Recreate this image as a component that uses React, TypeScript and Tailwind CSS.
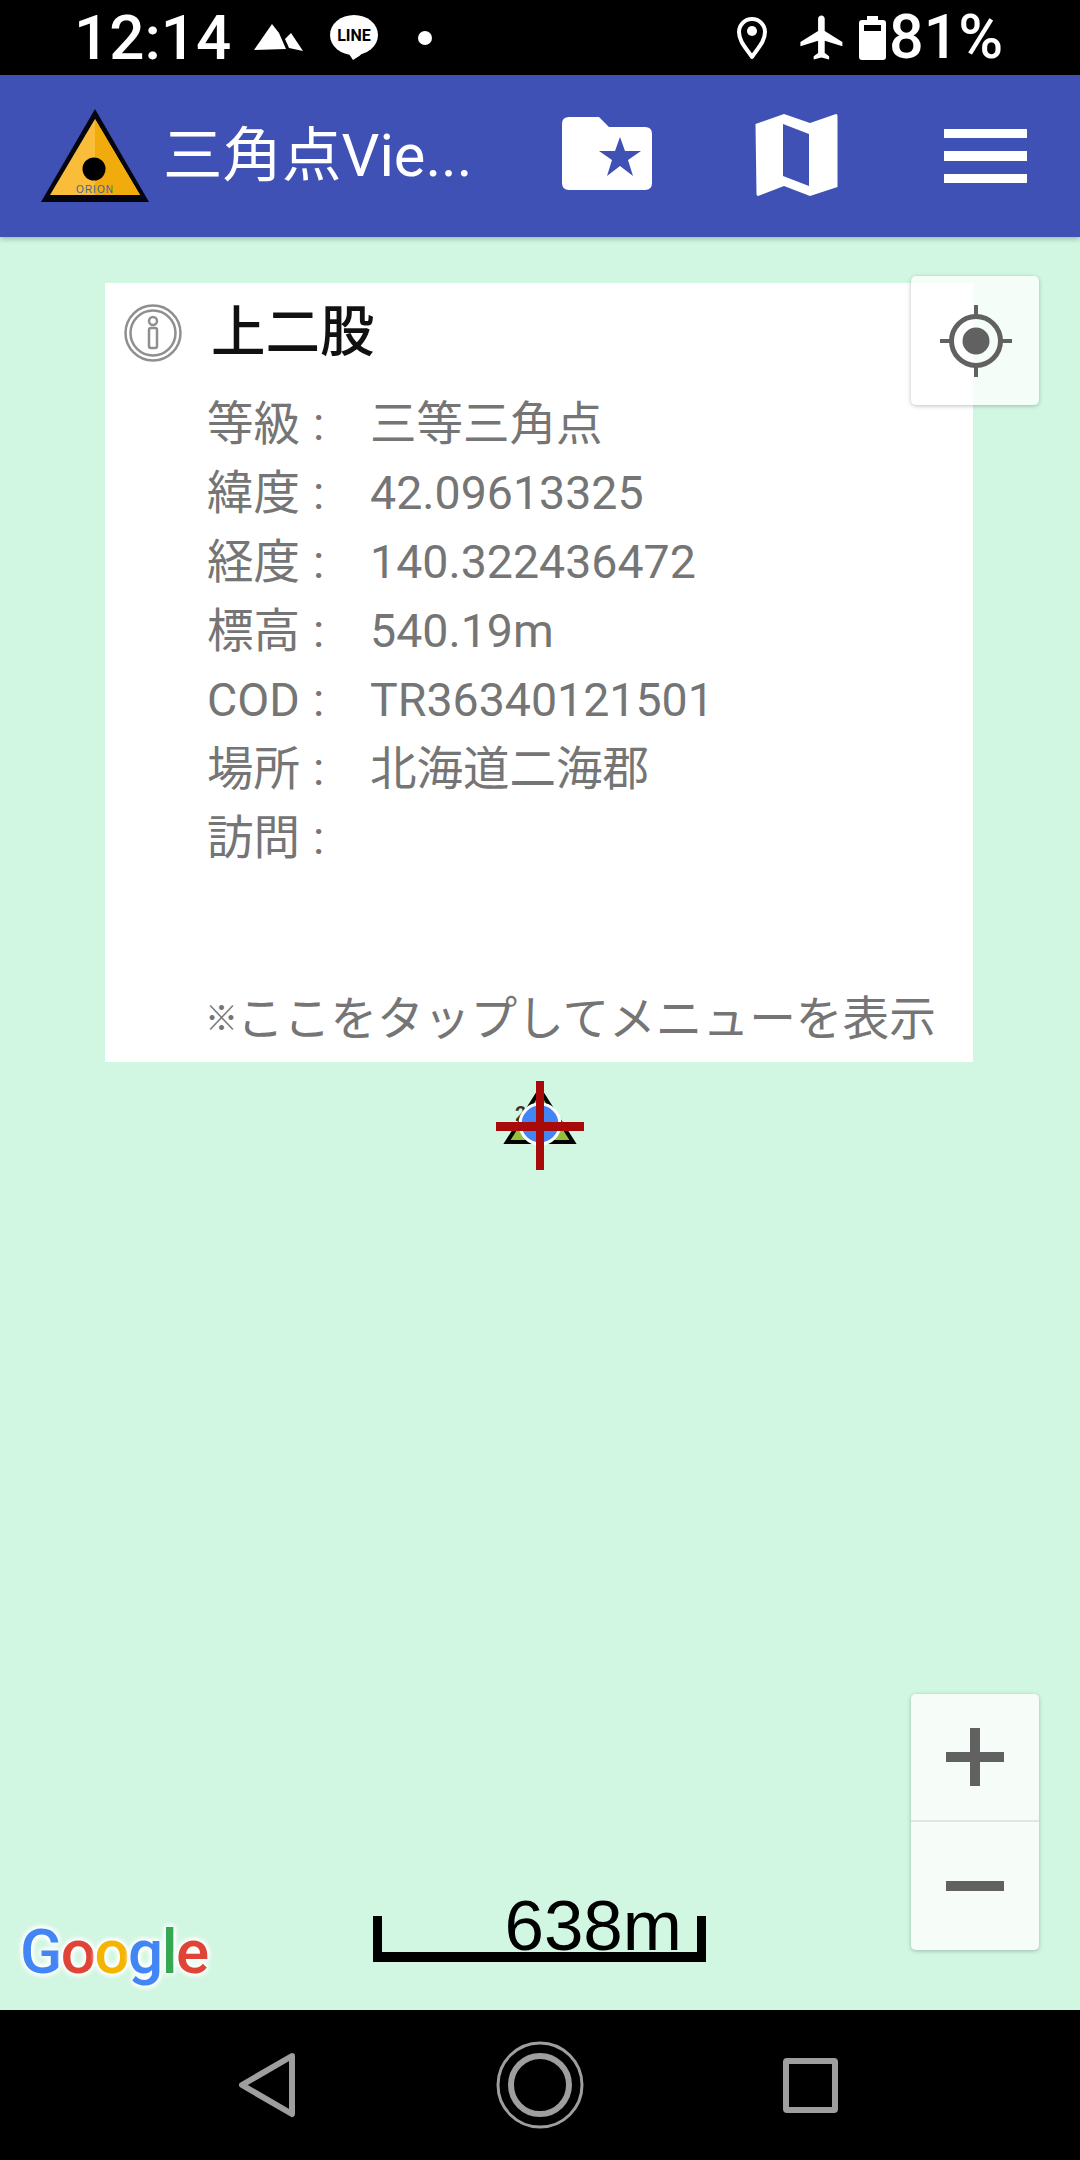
const sans = "font-['Roboto','Noto_Sans_CJK_JP',sans-serif]";

function Row({ label, value }: { label: string; value: string }) {
  return (
    <div className="grid grid-cols-[106px_57px_1fr] h-[69px] items-center text-[#757575] text-[46.5px] leading-[69px]">
      <span className="whitespace-nowrap">{label}</span>
      <span>:</span>
      <span className="whitespace-nowrap">{value}</span>
    </div>
  );
}

function Logo() {
  return (
    <svg width="108" height="94" viewBox="0 0 108 94" className="shrink-0">
      <polygon points="54,0 108,93 0,93" fill="#050510" />
      <polygon points="54,10 99,86 9,86" fill="#f9bd3a" />
      <polygon points="54,10 99,86 54,86" fill="#f2ab0d" />
      <circle cx="53" cy="60" r="11.5" fill="#000" />
      <text x="54" y="84" textAnchor="middle" fontSize="10" letterSpacing="1" fill="#3a66a0" fontFamily="Liberation Sans">ORION</text>
    </svg>
  );
}

function InfoIcon() {
  return (
    <svg width="58" height="58" viewBox="0 0 58 58" fill="none" stroke="#8f8f8f" strokeWidth="2.5">
      <circle cx="29" cy="29" r="27.5" />
      <circle cx="29" cy="29" r="22.5" />
      <circle cx="29" cy="17" r="4" />
      <rect x="25" y="24" width="8" height="20" rx="2" />
    </svg>
  );
}

export default function App() {
  return (
    <div className={`w-[1080px] h-[2160px] flex flex-col overflow-hidden ${sans}`}>
      {/* status bar */}
      <div className="h-[75px] shrink-0 bg-black text-white flex items-center">
        <span className="ml-[74px] w-[155px] text-[62px] leading-[75px] font-medium">12:14</span>
        <svg width="50" height="28" viewBox="0 0 50 28" className="ml-[25px]">
          <path d="M18 0 L25 9 L32 25 L0 26 Z" fill="#fff" />
          <path d="M37 9 L49 27 L35 24 L31 15 Z" fill="#fff" />
        </svg>
        <svg width="50" height="46" viewBox="0 0 50 46" className="ml-[25px]">
          <ellipse cx="25" cy="20" rx="24" ry="20" fill="#fff" />
          <path d="M18 36 L24 45 Q30 42 36 36 Z" fill="#fff" />
          <text x="25" y="26" textAnchor="middle" fontSize="16" fontWeight="700" fill="#000" fontFamily="Roboto">LINE</text>
        </svg>
        <span className="ml-[39px] w-[14px] h-[14px] rounded-full bg-white" />
        <svg width="32" height="44" viewBox="0 0 32 44" fill="none" className="ml-[304px]">
          <path d="M16 41 C11 33 3 26 3 16 A13 13 0 0 1 29 16 C29 26 21 33 16 41 Z" stroke="#fff" strokeWidth="4" strokeLinejoin="round" />
          <circle cx="16" cy="15" r="5" fill="#fff" />
        </svg>
        <svg width="53" height="53" viewBox="0 0 24 24" className="ml-[28px]" fill="#fff">
          <path d="M21 16v-2l-8-5V3.5c0-.83-.67-1.5-1.5-1.5S10 2.67 10 3.5V9l-8 5v2l8-2.5V19l-2 1.5V22l3.5-1 3.5 1v-1.5L13 19v-5.5l8 2.5z" />
        </svg>
        <svg width="27" height="44" viewBox="0 0 27 44" className="ml-[10px]">
          <path d="M8 0 H19 V4 H24 Q27 4 27 7 V41 Q27 44 24 44 H3 Q0 44 0 41 V7 Q0 4 3 4 H8 Z" fill="#fff" />
          <rect x="5" y="9" width="17" height="6" fill="#000" />
        </svg>
        <span className="ml-[3px] text-[61px] leading-[75px] font-medium whitespace-nowrap">81%</span>
      </div>

      {/* app bar */}
      <div className="relative z-10 h-[162px] shrink-0 bg-[#3f51b5] flex items-center shadow-[0_2px_5px_rgba(0,0,0,0.25)]">
        <div className="ml-[41px] mt-[-1px] flex"><Logo /></div>
        <span className="ml-[14px] w-[342px] text-white text-[59.5px] leading-[70px] whitespace-nowrap">三角点Vie...</span>
        <svg width="92" height="74" viewBox="0 0 92 74" className="ml-[56px] -mt-[4px]">
          <path d="M8 0 H38 L48 10 H84 Q91 10 91 17 V66 Q91 73 84 73 H8 Q1 73 1 66 V7 Q1 0 8 0 Z" fill="#fff" />
          <polygon points="59,20 64,34 80,34 67,43 72,59 59,49 46,59 51,43 38,34 54,34" fill="#3f51b5" />
        </svg>
        <svg width="84" height="84" viewBox="755 114 84 84" className="ml-[102px] -mt-[3px]">
          <path fillRule="evenodd" d="M755.5 125 L784 115 L810 124 L836 115 Q837.5 115 837.5 117 L837.5 188 L810 197 L784 187 L758 197 Q756.5 197 756.5 195 Z M783 125 L809 135 L809 187 L783 177 Z" fill="#fff" />
        </svg>
        <div className="ml-[105px] -mt-[1px] w-[83px] flex flex-col gap-[13px]">
          <div className="h-[9px] bg-white" />
          <div className="h-[10px] bg-white" />
          <div className="h-[9px] bg-white" />
        </div>
      </div>

      {/* map */}
      <div className="relative flex-1 bg-[#d1f7e2] overflow-hidden">
        {/* info window */}
        <div className="absolute left-[105px] top-[46px] w-[868px] h-[779px] bg-white flex flex-col pl-[102px]">
          <div className="h-[70px] flex items-center relative">
            <div className="absolute left-[-83px] top-[21px] flex"><InfoIcon /></div>
            <span className="ml-[4px] mt-[28px] text-[54.5px] leading-[60px] font-medium text-[#111]">上二股</span>
          </div>
          <div className="mt-[37px] flex flex-col">
            <Row label="等級" value="三等三角点" />
            <Row label="緯度" value="42.09613325" />
            <Row label="経度" value="140.322436472" />
            <Row label="標高" value="540.19m" />
            <Row label="COD" value="TR36340121501" />
            <Row label="場所" value="北海道二海郡" />
            <Row label="訪問" value="" />
          </div>
          <div className="mt-[116px] text-[#757575] text-[46.7px] leading-[60px] whitespace-nowrap flex items-center">
            <span className="w-[30px] -ml-[2px] mr-[2px] text-[33px] font-bold leading-[60px]">※</span>
            <span>ここをタップしてメニューを表示</span>
          </div>
        </div>

        {/* location button */}
        <div className="absolute left-[911px] top-[39px] w-[128px] h-[129px] rounded-[5px] bg-white/75 shadow-[0_1px_4px_rgba(0,0,0,0.25)] flex items-center justify-center">
          <svg width="74" height="74" viewBox="0 0 74 74" fill="none" stroke="#616161" className="ml-[1px]">
            <circle cx="37" cy="37" r="24.5" strokeWidth="5" />
            <circle cx="37" cy="37" r="13.5" fill="#616161" stroke="none" />
            <path d="M37 1 V13 M37 61 V73 M1 37 H13 M61 37 H73" strokeWidth="4" />
          </svg>
        </div>

        {/* marker */}
        <svg width="100" height="100" viewBox="0 0 100 100" className="absolute left-[490px] top-[840px]">
          <polygon points="50,13 83,65 17,65" fill="#8fc13a" stroke="#000" strokeWidth="4" />
          <text x="25" y="44" fontSize="20" fontWeight="700" fill="#333" fontFamily="Roboto">2</text>
          <circle cx="50" cy="47" r="20" fill="#4285f4" stroke="#fff" strokeWidth="3" />
          <rect x="46" y="4" width="8" height="89" fill="#a80a0a" />
          <rect x="6" y="45" width="88" height="9" fill="#a80a0a" />
        </svg>

        {/* zoom controls */}
        <div className="absolute left-[911px] top-[1457px] w-[128px] h-[256px] rounded-[5px] bg-white/80 shadow-[0_1px_4px_rgba(0,0,0,0.25)] flex flex-col">
          <div className="relative h-[128px] flex items-center justify-center border-b-2 border-[#dfe8e6]">
            <div className="w-[58px] h-[10px] bg-[#616161]" />
            <div className="absolute w-[10px] h-[58px] bg-[#616161]" />
          </div>
          <div className="flex-1 flex items-center justify-center">
            <div className="w-[58px] h-[10px] bg-[#616161]" />
          </div>
        </div>

        {/* google */}
        <div className="absolute left-[20px] top-[1680px] text-[62px] leading-[70px] font-medium tracking-[-1.5px] font-['Roboto',sans-serif] [text-shadow:0_0_6px_#fff,0_0_6px_#fff,0_0_6px_#fff,0_0_6px_#fff]">
          <span className="text-[#4285f4]">G</span>
          <span className="text-[#e04437]">o</span>
          <span className="text-[#f4b400]">o</span>
          <span className="text-[#4285f4]">g</span>
          <span className="text-[#34a853]">l</span>
          <span className="text-[#e04437]">e</span>
        </div>

        {/* scale */}
        <div className="absolute left-[373px] top-[1679px] w-[333px] h-[46px] border-x-[9px] border-b-[10px] border-black flex justify-end">
          <span className="mr-[15px] -mt-[26px] text-black text-[71px] leading-[71px] font-['Liberation_Sans',sans-serif]">638m</span>
        </div>
      </div>

      {/* nav */}
      <div className="h-[150px] shrink-0 bg-black flex items-center">
        <svg width="58" height="66" viewBox="0 0 58 66" fill="none" className="ml-[238px]">
          <path d="M54 4 L4 33 L54 62 Z" stroke="#9e9e9e" strokeWidth="6" strokeLinejoin="round" />
        </svg>
        <svg width="88" height="88" viewBox="0 0 88 88" fill="none" stroke="#9e9e9e" className="ml-[200px]">
          <circle cx="44" cy="44" r="42" strokeWidth="3" />
          <circle cx="44" cy="44" r="29" strokeWidth="6" />
        </svg>
        <div className="ml-[199px] w-[55px] h-[55px] rounded-[4px] border-[6px] border-[#9e9e9e]" />
      </div>
    </div>
  );
}
